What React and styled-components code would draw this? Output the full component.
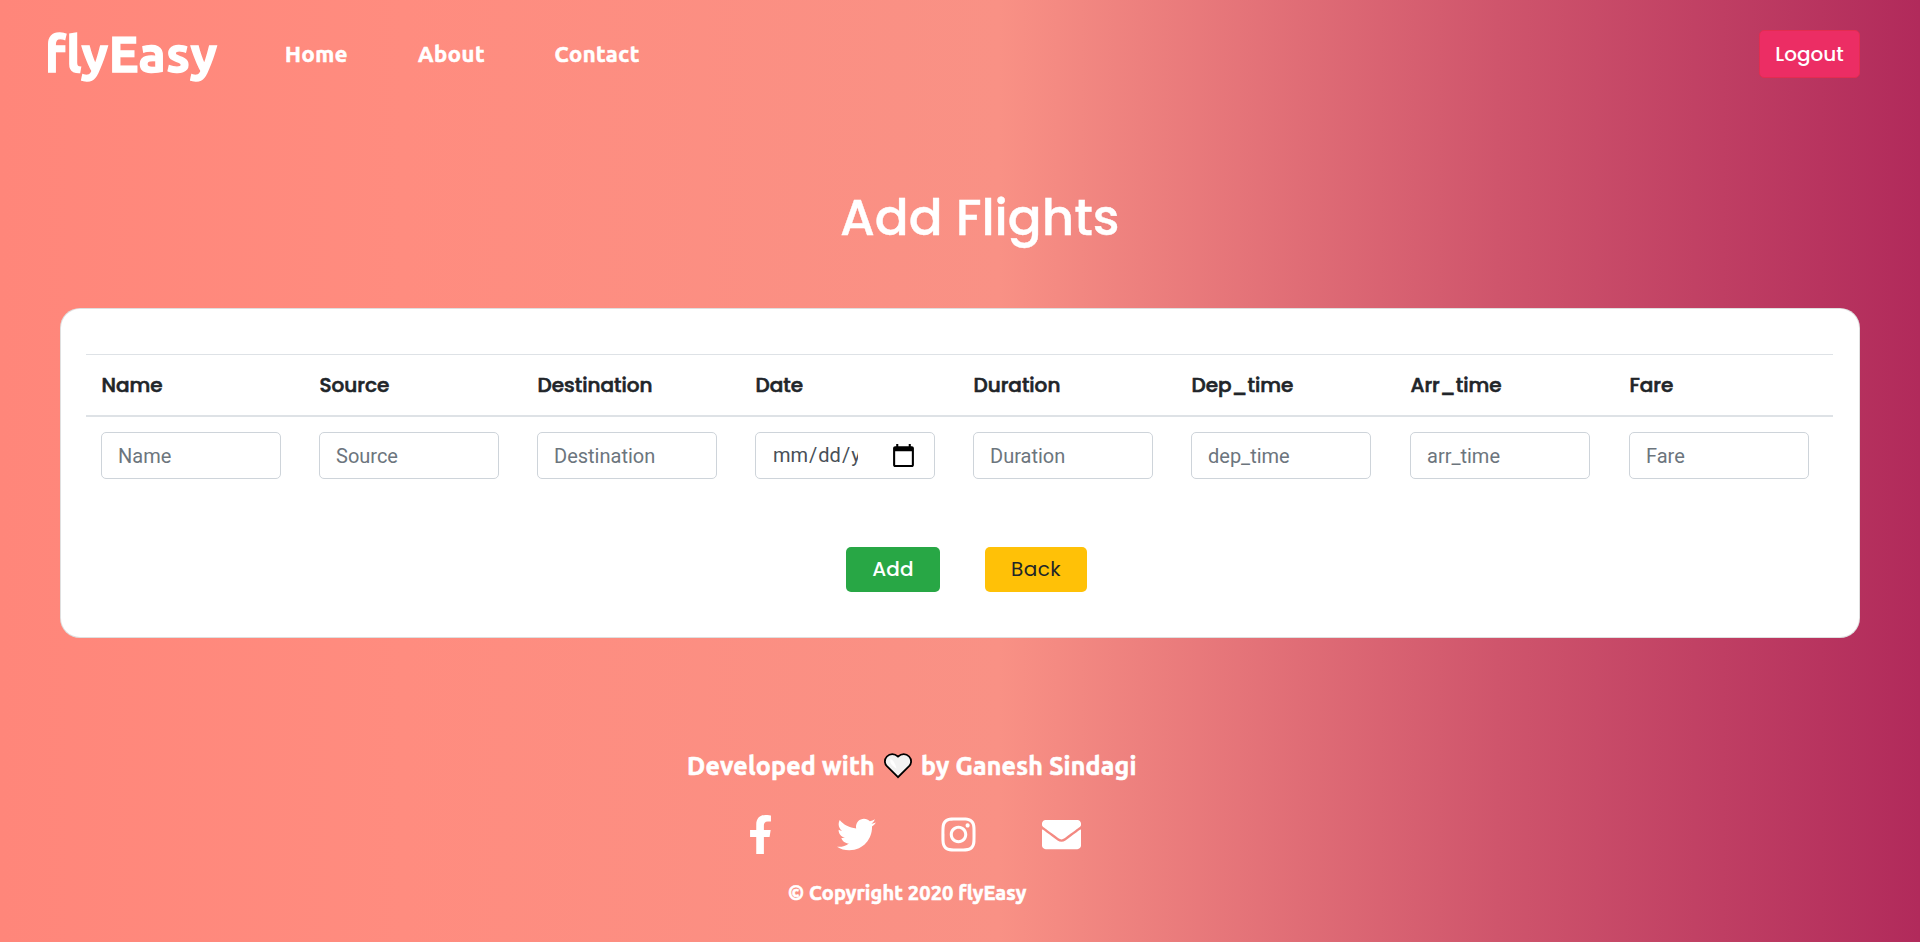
import React from "react";
import styled, { createGlobalStyle } from "styled-components";
import { FaFacebookF, FaTwitter, FaInstagram, FaEnvelope } from "react-icons/fa";

const ubuntu = `Ubuntu, "Noto Sans", sans-serif`;
const poppins = `Poppins, Inter, sans-serif`;

const GlobalStyle = createGlobalStyle`
  *, *::before, *::after { box-sizing: border-box; }
  html { font-size: 20px; }
  body { margin: 0; overflow: hidden; font-family: ${poppins}; color: #212529; }
`;

const Page = styled.div`
  height: 942px;
  display: flex;
  flex-direction: column;
  background: linear-gradient(to right, #ff867a 0%, #ff8c7f 21%, #f99185 52%, #cf556c 78%, #b12a5b 100%);
`;

const Nav = styled.nav`
  height: 108px;
  padding: 0 60px 0 45px;
  display: flex;
  align-items: center;
`;

const Brand = styled.a`
  width: 240px;
  padding-bottom: 2px;
  font: 700 50px/60px ${ubuntu};
  letter-spacing: 0.6px;
  -webkit-text-stroke: 1.4px #fff;
  color: #fff;
`;

const NavLink = styled.a`
  width: ${(p) => p.$width}px;
  font: 700 22px/30px ${ubuntu};
  letter-spacing: 0.55px;
  -webkit-text-stroke: 0.6px #fff;
  color: #fff;
  white-space: nowrap;
`;

const Logout = styled.button`
  width: 101px;
  height: 48px;
  margin-left: auto;
  padding: 0;
  border: 1px solid #e42c50;
  border-radius: 5px;
  background: #ec2d64;
  color: #fff;
  font: 500 20px/30px ${poppins};
`;

const Title = styled.h1`
  height: 200px;
  margin: 0;
  padding: 80px 0 0 840px;
  color: #fff;
  font: 500 50px/60px ${poppins};
  -webkit-text-stroke: 0.4px #fff;
  white-space: nowrap;
`;

const Card = styled.main`
  height: 330px;
  margin: 0 60px;
  padding: 45px 26px 0 25px;
  border: 1px solid rgba(0, 0, 0, 0.125);
  border-radius: 20px;
  background: #fff;
`;

const Table = styled.table`
  width: 1747px;
  table-layout: fixed;
  border-collapse: separate;
  border-spacing: 0;
`;

const HeadCell = styled.th`
  width: ${(p) => p.$width}px;
  height: 63px;
  padding: 0 15px 0 15.5px;
  border-top: 1px solid #dee2e6;
  border-bottom: 2px solid #dee2e6;
  text-align: left;
  font: 500 20px/30px ${poppins};
  -webkit-text-stroke: 0.6px #212529;
`;

const Cell = styled.td`
  padding: 15px 15px 0;
`;

const Field = styled.input`
  display: block;
  width: 180px;
  height: 47px;
  padding: 7.5px 15px 7.5px 16px;
  border: 1px solid #ced4da;
  border-radius: 5px;
  background: #fff;
  color: #495057;
  font: 400 20px/30px Roboto, sans-serif;
  &::placeholder { color: #6c757d; opacity: 1; }
  &::-webkit-datetime-edit {
    min-width: 0;
    overflow: hidden;
    padding-bottom: 2px;
  }
  &::-webkit-calendar-picker-indicator {
    box-sizing: content-box;
    flex: none;
    width: 25px;
    height: 25px;
    padding: 0 3px;
    margin-left: 30px;
    background-size: 25px 25px;
    background-position: center;
    background-repeat: no-repeat;
  }
`;

const Actions = styled.div`
  display: flex;
  gap: 45px;
  padding: 68px 0 0 760px;
`;

const Action = styled.button`
  width: ${(p) => p.$width}px;
  height: 45px;
  padding: 0 0 2px;
  border: 0;
  border-radius: 5px;
  background: ${(p) => p.$bg};
  color: ${(p) => p.$color};
  font: ${(p) => p.$weight} 20px/30px ${poppins};
  letter-spacing: ${(p) => p.$spacing}px;
`;

const Footer = styled.footer`
  padding-top: 109px;
  color: #fff;
  font-family: ${ubuntu};
  font-weight: 700;
  -webkit-text-stroke: 0.6px #fff;
  white-space: nowrap;
`;

const Credit = styled.div`
  display: flex;
  align-items: center;
  height: 38px;
  padding-left: 687px;
  font-size: 25px;
`;

const CreditPart = styled.span`
  width: ${(p) => p.$width}px;
  letter-spacing: 0.2px;
`;

const Heart = styled.svg`
  width: 28px;
  height: 26px;
  margin-right: 9px;
`;

const Social = styled.div`
  display: flex;
  gap: 63.5px;
  height: 39px;
  margin: 30px 0 0 741px;
  font-size: 39px;
`;

const Facebook = styled(FaFacebookF)`
  margin-right: -7px;
`;

const Copyright = styled.div`
  margin: 24px 0 0 788px;
  font-size: 20px;
  line-height: 30px;
  letter-spacing: 0.12px;
`;

const columns = [
  { label: "Name", placeholder: "Name", width: 218 },
  { label: "Source", placeholder: "Source", width: 218 },
  { label: "Destination", placeholder: "Destination", width: 218 },
  { label: "Date", type: "date", width: 218 },
  { label: "Duration", placeholder: "Duration", width: 218 },
  { label: "Dep_time", placeholder: "dep_time", width: 219 },
  { label: "Arr_time", placeholder: "arr_time", width: 219 },
  { label: "Fare", placeholder: "Fare", width: 219 },
];

export default function App() {
  return (
    <Page>
      <GlobalStyle />
      <Nav>
        <Brand>flyEasy</Brand>
        <NavLink $width={133}>Home</NavLink>
        <NavLink $width={136.5}>About</NavLink>
        <NavLink $width={90}>Contact</NavLink>
        <Logout>Logout</Logout>
      </Nav>
      <Title>Add Flights</Title>
      <Card>
        <Table>
          <thead>
            <tr>
              {columns.map((c) => (
                <HeadCell key={c.label} $width={c.width}>{c.label}</HeadCell>
              ))}
            </tr>
          </thead>
          <tbody>
            <tr>
              {columns.map((c) => (
                <Cell key={c.label}>
                  <Field type={c.type || "text"} placeholder={c.placeholder} />
                </Cell>
              ))}
            </tr>
          </tbody>
        </Table>
        <Actions>
          <Action $width={94} $bg="#28a745" $color="#fff" $weight={500} $spacing={0.1}>Add</Action>
          <Action $width={102} $bg="#ffc107" $color="#212529" $weight={400} $spacing={0.4}>Back</Action>
        </Actions>
      </Card>
      <Footer>
        <Credit>
          <CreditPart $width={197}>Developed with</CreditPart>
          <Heart viewBox="0 0 28 26">
            <path
              d="M14 24.2 2.9 13.200C.3 10.500.2 6.300 2.900 3.500 5.900.3 10.500.2 14 3.600 17.500.2 22.100.3 25.100 3.500 27.800 6.300 27.700 10.500 25.100 13.200Z"
              fill="#f2f2f2"
              stroke="#000"
              strokeWidth="1.8"
            />
            <path d="M6.500 6c-1 3 .5 6.500 6 9.500C11.500 11.500 9.500 7 6.500 6Z" fill="#fff" />
          </Heart>
          <CreditPart $width={230}>by Ganesh Sindagi</CreditPart>
        </Credit>
        <Social>
          <Facebook />
          <FaTwitter />
          <FaInstagram />
          <FaEnvelope />
        </Social>
        <Copyright>© Copyright 2020 flyEasy</Copyright>
      </Footer>
    </Page>
  );
}
